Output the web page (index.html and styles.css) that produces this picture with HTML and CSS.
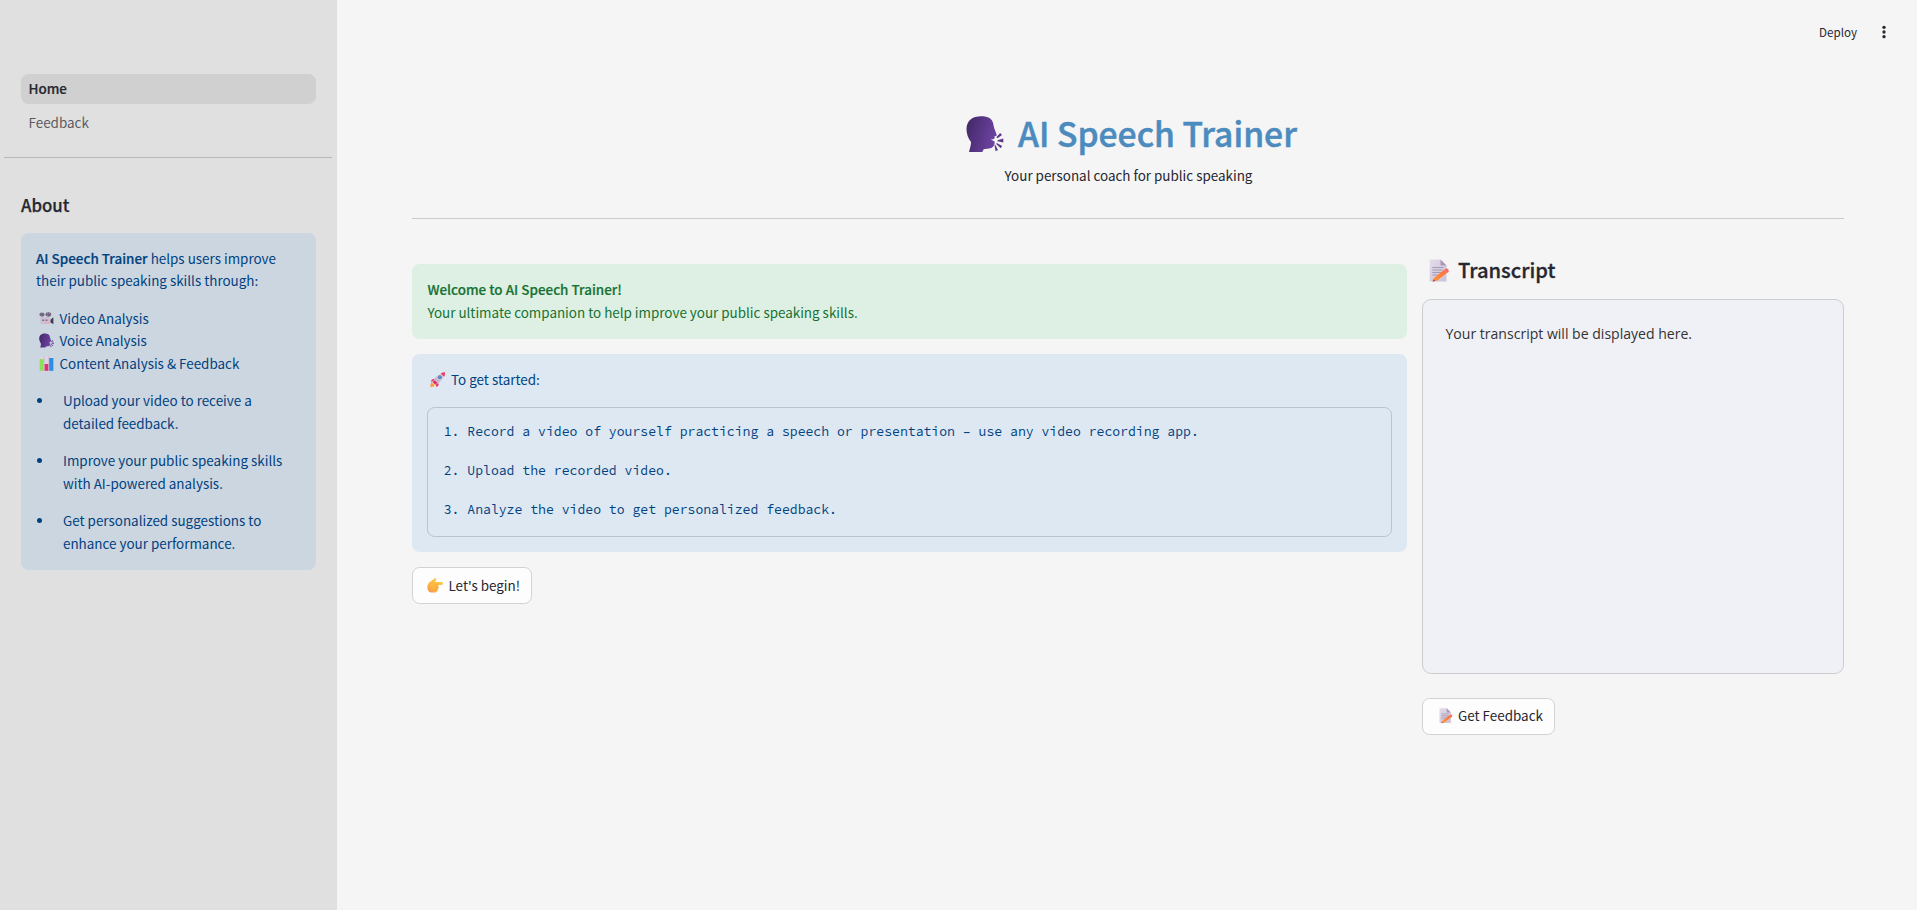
FILE: index.html
```html
<!DOCTYPE html>
<html lang="en">
<head>
<meta charset="utf-8">
<title>AI Speech Trainer</title>
<link rel="stylesheet" href="styles.css">
</head>
<body>
<svg class="defs" width="0" height="0" aria-hidden="true">
  <defs>
    <linearGradient id="purple" x1="0" y1="0.3" x2="1" y2="0.6">
      <stop offset="0" stop-color="#44296b"/><stop offset="1" stop-color="#7044a4"/>
    </linearGradient>
    <linearGradient id="paper" x1="0" y1="0" x2="1" y2="1">
      <stop offset="0" stop-color="#e3dcea"/><stop offset="1" stop-color="#cbc0d6"/>
    </linearGradient>
    <linearGradient id="pencil" x1="1" y1="0" x2="0" y2="1">
      <stop offset="0" stop-color="#ff6a3c"/><stop offset="1" stop-color="#ff9a3a"/>
    </linearGradient>
    <linearGradient id="hand" x1="0" y1="1" x2="0.8" y2="0">
      <stop offset="0" stop-color="#f59057"/><stop offset="0.4" stop-color="#fdb443"/><stop offset="1" stop-color="#ffcb3e"/>
    </linearGradient>
    <linearGradient id="rocket" x1="0" y1="1" x2="1" y2="0">
      <stop offset="0" stop-color="#b9a8cb"/><stop offset="1" stop-color="#ded5e6"/>
    </linearGradient>
    <symbol id="i-head" viewBox="0 0 38 36">
      <path fill="url(#purple)" d="M3 36C4 32 5.2 28.500 5 26C2 22 .4 17.500.5 12.500C1 4 7 .3 15 .3C22 .2 26 2.600 27.200 7.500C27.600 10.500 28.400 12.500 29.300 15C30 17 31 18.500 30.600 19.800L28.300 20.500C29 21.600 28.700 22.800 27.400 23.200L24.600 23.400L28.300 25.300C29.300 27 28.300 30.700 25.300 32C22.300 33 18.500 32.700 17.500 33.500L16.300 36Z"/>
      <path fill="#5d3a8b" d="M30.300 21.200L34.200 17L36 19L31.600 22.200ZM31.500 24.200L37.300 22.600V26.600L31.500 25.300ZM30.800 27L36.200 30L34.700 32.200L30.200 27.900ZM29.300 28.700L32 34.200L29.500 35L28.500 29.200Z"/>
    </symbol>
    <symbol id="i-memo" viewBox="0 0 20 23">
      <path fill="url(#paper)" d="M.7.500H11.500L17.500 6.500V22.500H.7Z"/>
      <path fill="#a99ab8" d="M11.500.500L17.500 6.500H12.300Q11.500 6.500 11.500 5.700Z"/>
      <path stroke="#a194b0" stroke-width=".9" d="M3.300 8.500H14.500M3.300 11H13.500M3.300 13.500H12M3.300 16H9"/>
      <path fill="url(#pencil)" d="M15.300 10.700L18 13.800L8 21.700L3.700 22.500L5.200 18.800Z"/>
      <path fill="#ff6361" d="M15.600 10.500L17.300 9.300L19.500 10.600L19.700 12.900L18.200 14Z"/>
      <path fill="#934a50" d="M3.600 22.500L4.500 20.300L6.300 22.100Z"/>
    </symbol>
    <symbol id="i-camera" viewBox="0 0 16 13">
      <ellipse cx="3.200" cy="2.600" rx="2.800" ry="2.200" fill="#70627b"/><ellipse cx="10" cy="2.500" rx="3" ry="2.300" fill="#70627b"/>
      <g fill="#b9abc3"><circle cx="2.200" cy="1.800" r=".5"/><circle cx="4.300" cy="1.800" r=".5"/><circle cx="2.300" cy="3.600" r=".5"/><circle cx="9" cy="1.700" r=".5"/><circle cx="11.200" cy="1.800" r=".5"/><circle cx="9" cy="3.600" r=".5"/></g>
      <rect x="1.500" y="5.500" width="10.500" height="7.200" rx=".8" fill="#cdbdd5"/>
      <path fill="#dfb1c5" d="M6 10H11V12.500H6Z"/>
      <path fill="#7c6c87" d="M3.500 7.800H5.500V9.500H3.500ZM7 7.800H9V9.500H7Z"/>
      <path fill="#413848" d="M12.300 8L15.300 5.500V12.800L12.300 11Z"/>
    </symbol>
    <symbol id="i-chart" viewBox="0 0 15 15">
      <path fill="#dcd3e6" d="M.3.200H14.700V14.900H.3Z"/>
      <path stroke="#c0b5cd" stroke-width=".6" d="M5.100.200V14.900M9.700.200V14.900"/>
      <path fill="#8ee05c" d="M.6 3H4.800V14.800H.6Z"/><path fill="#e42e74" d="M5.600 8H9.300V14.800H5.600Z"/><path fill="#2c8de2" d="M10.200 2H14.400V14.800H10.200Z"/>
    </symbol>
    <symbol id="i-rocket" viewBox="0 0 16 16">
      <path fill="#ff9b35" d="M1.500 10.500Q.2 12 .5 15.500Q3.500 15.700 5 14Z"/>
      <path fill="#f2395f" d="M3.800 7Q1.500 7 .8 10L5 9.500ZM9 11.800Q9.300 14.500 6.300 15.300L6 11Z"/>
      <path fill="url(#rocket)" d="M2.800 10.700Q5.500 2.500 14.800.800Q14.200 9.500 5.500 13Z"/>
      <path fill="#f03d5f" d="M11 1.500Q13 .3 15.500.300Q15.700 3 14.500 5Z"/>
      <path fill="#e42e63" d="M2.800 10.600L4.800 8.600L7.400 11.100L5.400 13.200Z"/>
      <circle cx="10.200" cy="5.300" r="2" fill="#66789c"/><circle cx="10.200" cy="5.300" r="1.200" fill="#3fa0ef"/>
    </symbol>
    <symbol id="i-point" viewBox="0 0 16 15">
      <path fill="url(#hand)" d="M.3 8.500Q1 4.500 4 3.300L7.500.600Q9.300-.2 9.300 1.500Q9 3 7.700 3.900H14.500Q16 4.200 16 5.500Q15.900 6.900 14.500 7H10.800Q12 7.700 11.500 9Q12 10.200 10.900 11Q11.200 12.400 10 12.900Q9.700 14.400 8 14.500H4Q.2 14 .3 8.500Z"/>
      <path fill="none" stroke="#e98342" stroke-width=".4" d="M8 7H11M8 9.400H11.200M7.600 11.700H10.500"/>
    </symbol>
  </defs>
</svg>

<div class="app">
  <aside class="sidebar">
    <nav class="nav">
      <a class="nav-item active">Home</a>
      <a class="nav-item">Feedback</a>
    </nav>
    <hr class="side-rule">
    <h3 class="about-title">About</h3>
    <section class="about-box">
      <p><span class="strong">AI Speech Trainer</span> helps users improve<br>their public speaking skills through:</p>
      <ul class="features">
        <li><svg class="camera"><use href="#i-camera"/></svg>Video Analysis</li>
        <li><svg class="head"><use href="#i-head"/></svg>Voice Analysis</li>
        <li><svg class="chart"><use href="#i-chart"/></svg>Content Analysis &amp; Feedback</li>
      </ul>
      <ul class="bullets">
        <li>Upload your video to receive a<br>detailed feedback.</li>
        <li>Improve your public speaking skills<br>with AI-powered analysis.</li>
        <li>Get personalized suggestions to<br>enhance your performance.</li>
      </ul>
    </section>
  </aside>

  <main class="main">
    <header class="toolbar">
      <span>Deploy</span>
      <svg class="kebab" viewBox="0 0 4 14"><circle cx="2" cy="2.300" r="1.650"/><circle cx="2" cy="7" r="1.650"/><circle cx="2" cy="11.700" r="1.650"/></svg>
    </header>
    <div class="hero">
      <h1 class="title"><svg class="title-icon"><use href="#i-head"/></svg>AI Speech Trainer</h1>
      <p class="subtitle">Your personal coach for public speaking</p>
    </div>
    <hr class="main-rule">
    <div class="columns">
      <div class="left">
        <div class="alert success"><p><span class="strong">Welcome to AI Speech Trainer!</span><br>Your ultimate companion to help improve your public speaking skills.</p></div>
        <div class="alert info">
          <p class="lead"><svg class="rocket"><use href="#i-rocket"/></svg>To get started:</p>
          <pre class="steps">1. Record a video of yourself practicing a speech or presentation – use any video recording app.

2. Upload the recorded video.

3. Analyze the video to get personalized feedback.</pre>
        </div>
        <button class="btn begin"><svg class="point"><use href="#i-point"/></svg>Let's begin!</button>
      </div>
      <div class="right">
        <h2 class="transcript-title"><svg class="memo-lg"><use href="#i-memo"/></svg>Transcript</h2>
        <div class="transcript">Your transcript will be displayed here.</div>
        <button class="btn feedback"><svg class="memo-sm"><use href="#i-memo"/></svg>Get Feedback</button>
      </div>
    </div>
  </main>
</div>
</body>
</html>
```
FILE: styles.css
```css
* { box-sizing: border-box; margin: 0; padding: 0; }
body {
  font-family: "Noto Sans CJK SC", sans-serif;
  font-size: 13.43px;
  line-height: 22.5px;
  color: #262730;
  background: #f5f5f5;
  overflow: hidden;
}
.defs { position: absolute; }
svg { flex: none; }
ul { list-style: none; }
hr { border: 0; height: 1px; }
.strong { font-weight: 500; letter-spacing: 0.02px; -webkit-text-stroke: 0.2px currentColor; }
.app { display: flex; height: 910px; }

/* Sidebar */
.sidebar { width: 337px; flex: none; background: #e0e0e0; padding: 74px 21px 0; }
.nav { display: flex; flex-direction: column; gap: 4px; }
.nav-item { height: 30px; padding: 3px 7.5px 0; border-radius: 7.5px; color: #5b5c63; }
.nav-item.active { background: #d0d0d0; color: #262730; font-weight: 500; -webkit-text-stroke: 0.2px currentColor; }
.side-rule { margin: 19px -16px 0 -17px; background: #b9b9bb; }
.about-title { margin-top: 34px; height: 41px; font-size: 16.8px; line-height: 27px; font-weight: 500; -webkit-text-stroke: 0.25px currentColor; }
.about-box {
  width: 295px; height: 337px; padding: 13.75px 15px 0;
  border-radius: 7.5px; background: #ccd6e0; color: #004280;
  display: flex; flex-direction: column; gap: 15px;
}
.features li { display: flex; align-items: center; }
.features svg { width: 15px; margin: 0 5.5px 0 3px; }
.camera { height: 12.5px; }
.head, .chart { height: 15px; }
.bullets { display: flex; flex-direction: column; gap: 15px; }
.bullets li { display: grid; grid-template-columns: 27px 1fr; }
.bullets li::before { content: ""; width: 5px; height: 5px; margin: 8.5px 0 0 1px; border-radius: 50%; background: #004280; }

/* Main area */
.main { flex: 1; padding: 0 73px 0 75px; }
.toolbar { height: 64px; margin-right: -41.5px; display: flex; justify-content: flex-end; align-items: center; gap: 24.5px; font-size: 11.6px; }
.kebab { width: 4px; height: 14px; fill: #262730; }
.hero { height: 154px; padding-top: 44px; text-align: center; }
.title { height: 50px; padding-left: 7px; display: flex; justify-content: center; align-items: center; font-size: 33.63px; line-height: 50px; font-weight: 500; color: #4b8bbe; -webkit-text-stroke: 0.5px currentColor; }
.title-icon { width: 38px; height: 36px; margin: 1.5px 14px 0 0; }
.subtitle { margin-top: 6px; padding-left: 1px; }
.main-rule { background: #cbcbcd; }
.columns { display: grid; grid-template-columns: 995px 422px; gap: 15px; padding-top: 45px; }
.alert { border-radius: 7.5px; padding: 14px 15px 0 15.4px; }
.success { height: 75px; background: #def0e4; color: #177233; }
.info { height: 198px; margin-top: 15px; padding: 14px 15px 0; background: #dee8f2; color: #004280; }
.lead { display: flex; align-items: center; }
.rocket { width: 15.5px; height: 15.5px; margin: 0 6px 0 2.5px; }
.steps { height: 130px; margin-top: 16.500px; padding: 14px 15.7px; border: 1px solid #b8c4d0; border-radius: 7.5px; font: 13.125px/19.5px "Source Code Pro", "Liberation Mono", monospace; }
.btn { display: flex; align-items: center; height: 37px; border: 1px solid #d2d2d4; border-radius: 7.5px; background: #fdfdfd; color: inherit; font: inherit; }
.begin { width: 120px; margin-top: 15px; padding-left: 14px; }
.point { width: 16px; height: 15px; margin-right: 5.5px; }
.transcript-title { height: 35px; margin-top: -11px; padding-left: 7px; display: flex; align-items: center; font-size: 20.15px; font-weight: 500; -webkit-text-stroke: 0.3px currentColor; }
.memo-lg { width: 20px; height: 23px; margin-right: 9px; }
.transcript { height: 375px; margin-top: 11px; padding: 22px 22.5px; border: 1px solid #cbcdce; border-radius: 9px; background: #f0f1f6; color: #333; font: 14.05px/24px "Open Sans", sans-serif; }
.feedback { width: 133px; margin-top: 24px; padding: 0 0 2.500px 16px; }
.memo-sm { width: 13.500px; height: 15.500px; margin-right: 5.500px; }
```
